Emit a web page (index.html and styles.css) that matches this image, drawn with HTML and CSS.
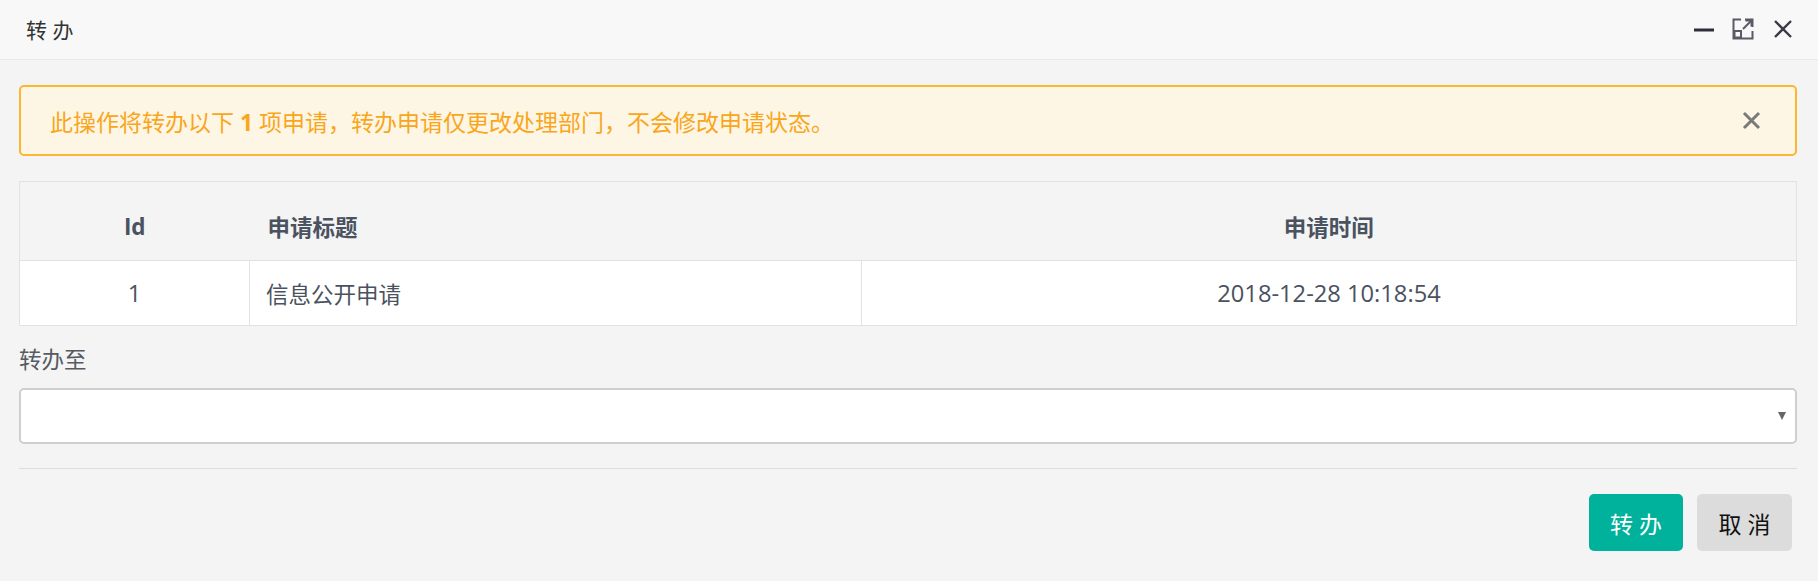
FILE: index.html
```html
<!DOCTYPE html>
<html lang="zh-CN">
<head>
<meta charset="utf-8">
<title>转办</title>
<link rel="stylesheet" href="styles.css">
</head>
<body>
<div class="dialog">
  <div class="dlg-header">
    <div class="dlg-title">转 办</div>
    <div class="dlg-tools">
      <svg class="tool tool-min" width="22" height="22" viewBox="0 0 22 22"><path d="M1 12 H21" stroke="#2e2e3a" stroke-width="3"/></svg>
      <svg class="tool tool-max" width="22" height="22" viewBox="0 0 22 22" fill="none" stroke="#5a5a66" stroke-width="2">
        <path d="M9 1.5 H1.5 V20.5 H20.5 V13"/>
        <path d="M13 1.5 H20.5 V9"/>
        <rect x="2.5" y="13" width="6.5" height="6.5"/>
        <path d="M11 11 L19.5 2.5"/>
        <path d="M13.5 2.5 H19.5 V8.5"/>
      </svg>
      <svg class="tool tool-close" width="20" height="20" viewBox="0 0 20 20"><path d="M2 2 L18 18 M18 2 L2 18" stroke="#3a3a44" stroke-width="2.4"/></svg>
    </div>
  </div>
  <div class="dlg-body">
    <div class="alert">
      <span class="alert-text">此操作将转办以下 <b>1</b> 项申请，转办申请仅更改处理部门，不会修改申请状态。</span>
      <svg class="alert-close" width="19" height="19" viewBox="0 0 19 19"><path d="M2 2 L17 17 M17 2 L2 17" stroke="#7a7a7a" stroke-width="3"/></svg>
    </div>
    <table class="grid">
      <colgroup><col class="c-id"><col class="c-title"><col class="c-time"></colgroup>
      <thead>
        <tr><th class="center">Id</th><th class="left">申请标题</th><th class="center">申请时间</th></tr>
      </thead>
      <tbody>
        <tr><td class="center num">1</td><td class="left">信息公开申请</td><td class="center num">2018-12-28 10:18:54</td></tr>
      </tbody>
    </table>
    <div class="field-label">转办至</div>
    <div class="select"><span class="caret"></span></div>
    <div class="divider"></div>
    <div class="actions">
      <button class="btn btn-primary">转 办</button>
      <button class="btn btn-default">取 消</button>
    </div>
  </div>
</div>
</body>
</html>
```

FILE: styles.css
```css
html, body {
  margin: 0;
  padding: 0;
  background: #f4f4f4;
}
body {
  font-family: "Open Sans", "Noto Sans CJK SC", sans-serif;
  color: #4a5260;
  width: 1818px;
  height: 581px;
  overflow: hidden;
}
.dialog {
  display: flex;
  flex-direction: column;
  height: 581px;
}
.dlg-header {
  height: 59px;
  background: #f8f8f8;
  border-bottom: 1px solid #e9e9e9;
  display: flex;
  align-items: center;
  justify-content: space-between;
  padding: 0 25px 0 26px;
}
.dlg-title {
  font-size: 21px;
  color: #333;
  margin-top: -2px;
}
.dlg-tools {
  display: flex;
  align-items: center;
  gap: 17px;
  margin-top: -2px;
}
.tool { display: block; }
.tool-close { margin-left: 2px; }
.dlg-body {
  padding: 25px 21px 0 19px;
  display: flex;
  flex-direction: column;
}
.alert {
  height: 71px;
  box-sizing: border-box;
  border: 2px solid #fbb731;
  border-radius: 5px;
  background: #fef6e5;
  display: flex;
  align-items: center;
  justify-content: space-between;
  padding: 0 34px 0 29px;
  color: #f9a61c;
  font-size: 23px;
}
.alert-text b { font-weight: 700; }
.alert-close { display: block; }
.grid {
  margin-top: 25px;
  width: 100%;
  border-collapse: collapse;
  table-layout: fixed;
  font-size: 22.5px;
}
.c-id { width: 230px; }
.c-title { width: 612px; }
.grid th {
  height: 79px;
  background: #f4f4f4;
  border-top: 1px solid #e1e1e6;
  border-bottom: 1px solid #e1e1e6;
  font-weight: 700;
  color: #4a5260;
  padding: 10px 0 0 0;
  box-sizing: border-box;
}
.grid th:first-child { border-left: 1px solid #e1e1e6; }
.grid th:last-child { border-right: 1px solid #e1e1e6; }
.grid td {
  height: 65px;
  background: #fff;
  border: 1px solid #e1e1e6;
  padding: 0;
  box-sizing: border-box;
}
.grid td.num { font-size: 23.7px; }
.grid th.left { text-align: left; padding-left: 18px; }
.grid td.left { text-align: left; padding-left: 16px; }
.center { text-align: center; }
.field-label {
  margin-top: 20px;
  font-size: 22.5px;
  line-height: 28px;
  color: #555a63;
}
.select {
  margin-top: 14px;
  height: 56px;
  box-sizing: border-box;
  border: 2px solid #cfcfcf;
  border-radius: 5px;
  background: #fff;
  display: flex;
  align-items: center;
  justify-content: flex-end;
  padding-right: 9px;
}
.caret {
  width: 0;
  height: 0;
  border-left: 4.5px solid transparent;
  border-right: 4.5px solid transparent;
  border-top: 8px solid #666;
}
.divider {
  margin-top: 24px;
  height: 1px;
  background: #dcdcdc;
}
.actions {
  display: flex;
  justify-content: flex-end;
  gap: 14px;
  margin-top: 25px;
  padding-right: 5px;
}
.btn {
  width: 94px;
  height: 57px;
  border: none;
  border-radius: 5px;
  font-family: "Open Sans", "Noto Sans CJK SC", sans-serif;
  font-size: 23px;
  padding: 0;
}
.btn-primary {
  background: #00b29c;
  color: #fff;
}
.btn-default {
  background: #dcdcdc;
  color: #111;
  width: 95px;
}
```
